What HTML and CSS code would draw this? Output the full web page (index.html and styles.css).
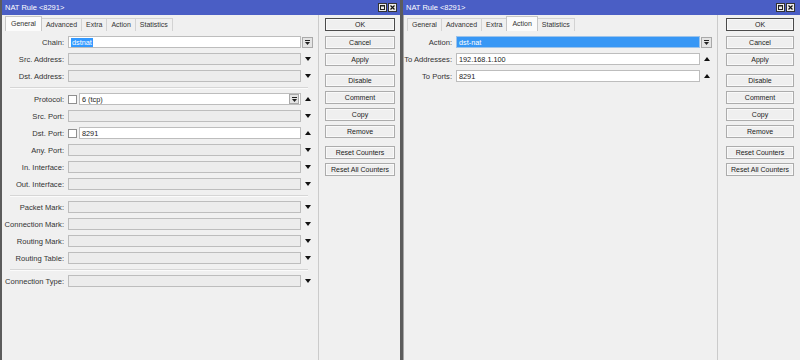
FILE: index.html
```html
<!DOCTYPE html>
<html>
<head>
<meta charset="utf-8">
<link rel="stylesheet" href="styles.css">
</head>
<body>
<div class="desk">
  <section class="win win-a">
    <header class="titlebar">
      <span class="title">NAT Rule &lt;8291&gt;</span>
      <span class="tbtns">
        <span class="tbtn"><svg width="5" height="5" viewBox="0 0 5 5"><rect x="0.5" y="0.5" width="4" height="4" fill="none" stroke="#222"/><path d="M0 1H5" stroke="#222"/></svg></span>
        <span class="tbtn"><svg width="5" height="5" viewBox="0 0 5 5"><path d="M0.5 0.5L4.5 4.5M4.5 0.5L0.5 4.5" stroke="#111" stroke-width="1.2"/></svg></span>
      </span>
    </header>
    <div class="body">
      <div class="pane">
        <nav class="tabs">
          <span class="tab active">General</span>
          <span class="tab">Advanced</span>
          <span class="tab">Extra</span>
          <span class="tab">Action</span>
          <span class="tab">Statistics</span>
        </nav>
        <div class="form">
          <div class="row"><span class="lbl">Chain:</span><div class="field filled"><span class="sel">dstnat</span></div><span class="aux"><span class="ddbtn"><svg width="7" height="7" viewBox="0 0 7 7"><path d="M1 1.5H6" stroke="#222"/><path d="M1 3H6L3.5 6Z" fill="#222"/></svg></span></span></div>
          <div class="row"><span class="lbl">Src. Address:</span><div class="field"></div><span class="aux"><svg class="tri" width="6" height="4" viewBox="0 0 6 4"><path d="M0 0H6L3 4Z"/></svg></span></div>
          <div class="row"><span class="lbl">Dst. Address:</span><div class="field"></div><span class="aux"><svg class="tri" width="6" height="4" viewBox="0 0 6 4"><path d="M0 0H6L3 4Z"/></svg></span></div>
          <div class="sep"></div>
          <div class="row"><span class="lbl">Protocol:</span><span class="chk"></span><div class="field filled combo"><span class="val">6 (tcp)</span><span class="ddbtn inner"><svg width="7" height="7" viewBox="0 0 7 7"><path d="M1 1.5H6" stroke="#222"/><path d="M1 3H6L3.5 6Z" fill="#222"/></svg></span></div><span class="aux"><svg class="tri" width="6" height="4" viewBox="0 0 6 4"><path d="M0 4H6L3 0Z"/></svg></span></div>
          <div class="row"><span class="lbl">Src. Port:</span><div class="field"></div><span class="aux"><svg class="tri" width="6" height="4" viewBox="0 0 6 4"><path d="M0 0H6L3 4Z"/></svg></span></div>
          <div class="row"><span class="lbl">Dst. Port:</span><span class="chk"></span><div class="field filled"><span class="val">8291</span></div><span class="aux"><svg class="tri" width="6" height="4" viewBox="0 0 6 4"><path d="M0 4H6L3 0Z"/></svg></span></div>
          <div class="row"><span class="lbl">Any. Port:</span><div class="field"></div><span class="aux"><svg class="tri" width="6" height="4" viewBox="0 0 6 4"><path d="M0 0H6L3 4Z"/></svg></span></div>
          <div class="row"><span class="lbl">In. Interface:</span><div class="field"></div><span class="aux"><svg class="tri" width="6" height="4" viewBox="0 0 6 4"><path d="M0 0H6L3 4Z"/></svg></span></div>
          <div class="row"><span class="lbl">Out. Interface:</span><div class="field"></div><span class="aux"><svg class="tri" width="6" height="4" viewBox="0 0 6 4"><path d="M0 0H6L3 4Z"/></svg></span></div>
          <div class="sep"></div>
          <div class="row"><span class="lbl">Packet Mark:</span><div class="field"></div><span class="aux"><svg class="tri" width="6" height="4" viewBox="0 0 6 4"><path d="M0 0H6L3 4Z"/></svg></span></div>
          <div class="row"><span class="lbl">Connection Mark:</span><div class="field"></div><span class="aux"><svg class="tri" width="6" height="4" viewBox="0 0 6 4"><path d="M0 0H6L3 4Z"/></svg></span></div>
          <div class="row"><span class="lbl">Routing Mark:</span><div class="field"></div><span class="aux"><svg class="tri" width="6" height="4" viewBox="0 0 6 4"><path d="M0 0H6L3 4Z"/></svg></span></div>
          <div class="row"><span class="lbl">Routing Table:</span><div class="field"></div><span class="aux"><svg class="tri" width="6" height="4" viewBox="0 0 6 4"><path d="M0 0H6L3 4Z"/></svg></span></div>
          <div class="sep"></div>
          <div class="row"><span class="lbl">Connection Type:</span><div class="field"></div><span class="aux"><svg class="tri" width="6" height="4" viewBox="0 0 6 4"><path d="M0 0H6L3 4Z"/></svg></span></div>
        </div>
      </div>
      <div class="actions">
        <span class="btn default">OK</span>
        <span class="btn">Cancel</span>
        <span class="btn">Apply</span>
        <span class="btn gap">Disable</span>
        <span class="btn">Comment</span>
        <span class="btn">Copy</span>
        <span class="btn">Remove</span>
        <span class="btn gap">Reset Counters</span>
        <span class="btn">Reset All Counters</span>
      </div>
    </div>
  </section>

  <section class="win win-b">
    <header class="titlebar">
      <span class="title">NAT Rule &lt;8291&gt;</span>
      <span class="tbtns">
        <span class="tbtn"><svg width="5" height="5" viewBox="0 0 5 5"><rect x="0.5" y="0.5" width="4" height="4" fill="none" stroke="#222"/><path d="M0 1H5" stroke="#222"/></svg></span>
        <span class="tbtn"><svg width="5" height="5" viewBox="0 0 5 5"><path d="M0.5 0.5L4.5 4.5M4.5 0.5L0.5 4.5" stroke="#111" stroke-width="1.2"/></svg></span>
      </span>
    </header>
    <div class="body">
      <div class="pane">
        <nav class="tabs">
          <span class="tab">General</span>
          <span class="tab">Advanced</span>
          <span class="tab">Extra</span>
          <span class="tab active">Action</span>
          <span class="tab">Statistics</span>
        </nav>
        <div class="form">
          <div class="row"><span class="lbl">Action:</span><div class="field focus"><span class="val">dst-nat</span></div><span class="aux"><span class="ddbtn"><svg width="7" height="7" viewBox="0 0 7 7"><path d="M1 1.5H6" stroke="#222"/><path d="M1 3H6L3.5 6Z" fill="#222"/></svg></span></span></div>
          <div class="row"><span class="lbl">To Addresses:</span><div class="field filled"><span class="val">192.168.1.100</span></div><span class="aux"><svg class="tri" width="6" height="4" viewBox="0 0 6 4"><path d="M0 4H6L3 0Z"/></svg></span></div>
          <div class="row"><span class="lbl">To Ports:</span><div class="field filled"><span class="val">8291</span></div><span class="aux"><svg class="tri" width="6" height="4" viewBox="0 0 6 4"><path d="M0 4H6L3 0Z"/></svg></span></div>
        </div>
      </div>
      <div class="actions">
        <span class="btn default">OK</span>
        <span class="btn">Cancel</span>
        <span class="btn">Apply</span>
        <span class="btn gap">Disable</span>
        <span class="btn">Comment</span>
        <span class="btn">Copy</span>
        <span class="btn">Remove</span>
        <span class="btn gap">Reset Counters</span>
        <span class="btn">Reset All Counters</span>
      </div>
    </div>
  </section>
</div>
</body>
</html>
```

FILE: styles.css
```css
* { box-sizing: border-box; }
html, body { margin: 0; padding: 0; }
body {
  width: 800px;
  height: 360px;
  overflow: hidden;
  background: #f0f0f0;
  font-family: "Liberation Sans", Arial, sans-serif;
  font-size: 7px;
  color: #333;
}
.desk { display: flex; height: 360px; }
.win {
  width: 400px;
  height: 360px;
  display: flex;
  flex-direction: column;
  background: #f0f0f0;
  flex: none;
}
.win-a { border-left: 2px solid #5c5c5c; }
.win-b { border-left: 3px solid #5c5c5c; box-shadow: inset 1px 0 0 #a5a5a5; }

.titlebar {
  height: 15px;
  flex: none;
  background: #4a5ec5;
  color: #fff;
  display: flex;
  align-items: center;
  justify-content: space-between;
  padding: 0 3px 0 3px;
  font-size: 7.5px;
}
.win-b .titlebar { padding-right: 5px; }
.tbtns { display: flex; gap: 1px; }
.tbtn {
  width: 9px;
  height: 9px;
  background: #ececec;
  border: 1px solid #333;
  display: flex;
  align-items: center;
  justify-content: center;
}

.body { display: flex; flex: 1; min-height: 0; }
.pane {
  width: 317px;
  flex: none;
  border-right: 1px solid #cbcbcb;
  display: flex;
  flex-direction: column;
}
.win-b .pane { width: 315px; }

.tabs {
  display: flex;
  align-items: flex-end;
  height: 16px;
  padding-left: 3px;
}
.win-b .tabs { padding-left: 4px; }
.tab {
  height: 13px;
  line-height: 12px;
  padding: 0 4px;
  border: 1px solid #d3d3d3;
  border-bottom: 0;
  margin-right: -1px;
  background: #f0f0f0;
  color: #333;
  white-space: nowrap;
}
.tab.active {
  height: 15px;
  line-height: 14px;
  padding: 0 5px;
  background: #fbfbfb;
  border-color: #c6c6c6;
  position: relative;
}

.form { padding: 5px 4px 0 0; }
.row {
  display: flex;
  align-items: center;
  height: 12px;
  margin-bottom: 5px;
}
.lbl {
  width: 62px;
  margin-right: 4px;
  flex: none;
  text-align: right;
  white-space: nowrap;
  color: #333;
  font-size: 7.6px;
}
.win-b .lbl { width: 49px; }
.field {
  flex: 1;
  min-width: 0;
  height: 12px;
  border: 1px solid #bdbdbd;
  background: #ececec;
  display: flex;
  align-items: center;
  padding-left: 2px;
  color: #222;
  font-size: 7.3px;
}
.field.filled { background: #fff; }
.field.focus {
  background: #3797f5;
  border-color: #9cc3ea;
  color: #fff;
}
.field.combo { padding-right: 1px; }
.val { white-space: nowrap; }
.sel {
  background: #3399ff;
  color: #fff;
  padding: 0 1px;
  line-height: 9px;
}
.aux {
  width: 13px;
  height: 12px;
  flex: none;
  display: flex;
  align-items: center;
  justify-content: center;
}
.tri { fill: #111; display: block; }
.ddbtn {
  width: 11px;
  height: 11px;
  border: 1px solid #a9a9a9;
  background: #e4e4e4;
  display: flex;
  align-items: center;
  justify-content: center;
}
.ddbtn.inner {
  margin-left: auto;
  width: 10px;
  height: 10px;
}
.chk {
  width: 9px;
  height: 9px;
  flex: none;
  border: 1px solid #8f8f8f;
  background: #fff;
  margin-right: 2px;
}
.sep {
  margin: 0 6px 4px 8px;
  border-top: 1px solid #d6d6d6;
  border-bottom: 1px solid #fbfbfb;
}

.actions {
  flex: 1;
  padding: 3px 5px 0 6px;
  display: flex;
  flex-direction: column;
}
.win-b .actions { padding: 3px 6px 0 8px; }
.btn {
  height: 13px;
  border: 1px solid #acacac;
  background: #efefef;
  box-shadow: inset 0 0 0 1px #f9f9f9;
  text-align: center;
  line-height: 11px;
  margin-bottom: 4px;
  color: #222;
  white-space: nowrap;
}
.btn.default { border-color: #4a4a4a; margin-bottom: 5px; }
.btn.gap { margin-top: 4px; }
```
